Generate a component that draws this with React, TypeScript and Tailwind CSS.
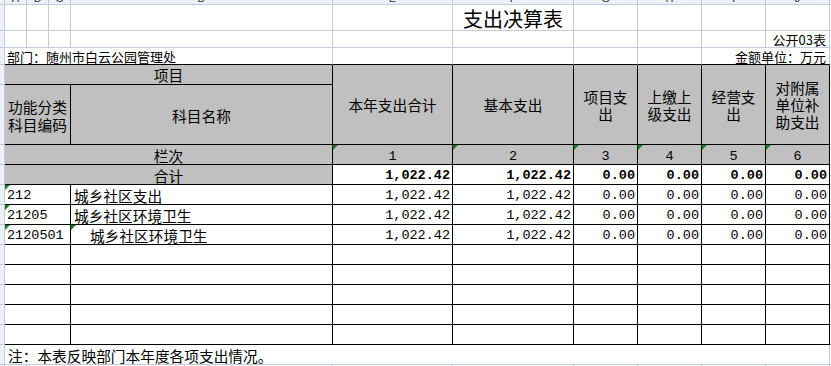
import React from "react";

const line = "border-[#c3cbdf]";
const head = "bg-[#edf0f5]";
const mono = "font-['Liberation_Mono',monospace] text-[13.5px]";

const letters = ["A", "B", "C", "D", "E", "F", "G", "H", "I", "J"];
const money = ["本年支出合计", "基本支出"];

const rows = [
  { code: "212", name: "城乡社区支出", indent: false },
  { code: "21205", name: "城乡社区环境卫生", indent: false },
  { code: "2120501", name: "城乡社区环境卫生", indent: true }
];

const values = ["1,022.42", "1,022.42", "0.00", "0.00", "0.00", "0.00"];

function Flag() {
  return (
    <svg className="absolute left-0 top-0" width="5" height="5" viewBox="0 0 5 5">
      <polygon points="0,0 5,0 0,5" fill="#12861a" />
    </svg>
  );
}

function Side() {
  return <div className={`${head} border-r border-b ${line}`} />;
}

function Blank() {
  return <div className={`border-r border-b ${line}`} />;
}

function Edge() {
  return <div className={`border-b ${line}`} />;
}

export default function App() {
  return (
    <div className="h-[366px] w-[831px] overflow-hidden bg-white font-['Noto_Sans_CJK_SC',sans-serif] text-black">
      <div className="grid grid-cols-[5px_22px_22px_22px_262px_120px_121px_64px_64px_64px_64px_2px] grid-rows-[5px_26px_17px_17px_20px_60px_repeat(10,20px)_20px_2px]">
        {/* column letters, mostly cut off */}
        <Side />
        {letters.map(l => (
          <div
            key={l}
            className={`${head} flex items-end justify-center overflow-hidden border-r border-b ${line}`}
          >
            <span className="font-['Liberation_Sans',sans-serif] text-[11px] leading-[11px] text-[#333]">
              {l}
            </span>
          </div>
        ))}
        <div className={`${head} border-b ${line}`} />

        {/* title */}
        <Side />
        <Blank />
        <Blank />
        <Blank />
        <Blank />
        <Blank />
        <div className={`flex items-center justify-center pt-[3px] border-r border-b ${line} text-[20px] leading-[20px]`}>
          支出决算表
        </div>
        <Blank />
        <Blank />
        <Blank />
        <Blank />
        <Edge />

        <Side />
        <Blank />
        <Blank />
        <Blank />
        <Blank />
        <Blank />
        <Blank />
        <Blank />
        <Blank />
        <Blank />
        <div className={`flex items-end justify-end pr-[3px] border-r border-b ${line} text-[13px] leading-[15px]`}>
          公开03表
        </div>
        <Edge />

        <Side />
        <div className={`col-span-4 flex items-end pl-[2px] border-r ${line} border-b border-b-black text-[13px] leading-[15px]`}>
          部门：随州市白云公园管理处
        </div>
        <div className={`border-r ${line} border-b border-b-black`} />
        <div className={`border-r ${line} border-b border-b-black`} />
        <div className={`border-r ${line} border-b border-b-black`} />
        <div className={`border-r ${line} border-b border-b-black`} />
        <div className={`col-span-2 flex items-end justify-end pr-[3px] border-r ${line} border-b border-b-black text-[13px] leading-[15px]`}>
          金额单位：万元
        </div>
        <Edge />

        {/* header */}
        <Side />
        <div className="col-span-4 flex items-center justify-center border-r border-b border-black bg-[#c0c0c0] text-[14.7px] leading-[17px]">
          项目
        </div>
        {money.map(t => (
          <div
            key={t}
            className="row-span-2 flex items-center justify-center border-r border-b border-black bg-[#c0c0c0] text-[14.7px] leading-[17px]"
          >
            {t}
          </div>
        ))}
        <div className="row-span-2 flex items-center justify-center border-r border-b border-black bg-[#c0c0c0] text-center text-[14.7px] leading-[17px]">
          项目支<br />出
        </div>
        <div className="row-span-2 flex items-center justify-center border-r border-b border-black bg-[#c0c0c0] text-center text-[14.7px] leading-[17px]">
          上缴上<br />级支出
        </div>
        <div className="row-span-2 flex items-center justify-center border-r border-b border-black bg-[#c0c0c0] text-center text-[14.7px] leading-[17px]">
          经营支<br />出
        </div>
        <div className="row-span-2 flex items-center justify-center border-r border-b border-black bg-[#c0c0c0] text-center text-[14.7px] leading-[17px]">
          对附属<br />单位补<br />助支出
        </div>
        <Edge />

        <Side />
        <div className="col-span-3 flex items-center justify-center pt-[2px] border-r border-b border-black bg-[#c0c0c0] text-center text-[14.7px] leading-[18px]">
          功能分类<br />科目编码
        </div>
        <div className="flex items-center justify-center pt-[1px] border-r border-b border-black bg-[#c0c0c0] text-[14.7px] leading-[17px]">
          科目名称
        </div>
        <Edge />

        {/* column numbers */}
        <Side />
        <div className="col-span-4 flex items-center justify-center pt-[2px] border-r border-b border-black bg-[#c0c0c0] text-[14.7px] leading-[17px]">
          栏次
        </div>
        {[1, 2, 3, 4, 5, 6].map(n => (
          <div
            key={n}
            className={`relative flex items-center justify-center pt-[4px] border-r border-b border-black bg-[#c0c0c0] ${mono} leading-[15px]`}
          >
            <Flag />
            {n}
          </div>
        ))}
        <Edge />

        {/* total */}
        <Side />
        <div className="col-span-4 flex items-center justify-center pt-[2px] border-r border-b border-black bg-[#c0c0c0] text-[14.7px] leading-[17px]">
          合计
        </div>
        {values.map((v, i) => (
          <div
            key={i}
            className={`flex items-center justify-end pt-[3px] pr-[2px] border-r border-b border-black ${mono} font-bold leading-[16px]`}
          >
            {v}
          </div>
        ))}
        <Edge />

        {rows.map(r => (
          <React.Fragment key={r.code}>
            <Side />
            <div className={`relative col-span-3 flex items-center pt-[3px] pl-[2px] border-r border-b border-black ${mono} leading-[16px]`}>
              <Flag />
              {r.code}
            </div>
            <div className="relative flex items-center pt-[2px] pl-[3px] border-r border-b border-black text-[14.7px] leading-[17px]">
              {r.indent && <Flag />}
              <span className={r.indent ? "pl-[16px]" : ""}>{r.name}</span>
            </div>
            {values.map((v, i) => (
              <div
                key={i}
                className={`flex items-center justify-end pt-[3px] pr-[2px] border-r border-b border-black ${mono} leading-[16px]`}
              >
                {v}
              </div>
            ))}
            <Edge />
          </React.Fragment>
        ))}

        {[0, 1, 2, 3, 4].map(k => (
          <React.Fragment key={k}>
            <Side />
            <div className="col-span-3 border-r border-b border-black" />
            <div className="border-r border-b border-black" />
            <div className="border-r border-b border-black" />
            <div className="border-r border-b border-black" />
            <div className="border-r border-b border-black" />
            <div className="border-r border-b border-black" />
            <div className="border-r border-b border-black" />
            <div className="border-r border-b border-black" />
            <Edge />
          </React.Fragment>
        ))}

        {/* note */}
        <Side />
        <div className={`col-span-10 flex items-center pt-[2px] pl-[3px] border-r border-b ${line} text-[14.7px] leading-[17px]`}>
          注：本表反映部门本年度各项支出情况。
        </div>
        <Edge />

        <div className={`${head} border-r ${line}`} />
        <div className={`border-r ${line}`} />
        <div className={`border-r ${line}`} />
        <div className={`border-r ${line}`} />
        <div className={`border-r ${line}`} />
        <div className={`border-r ${line}`} />
        <div className={`border-r ${line}`} />
        <div className={`border-r ${line}`} />
        <div className={`border-r ${line}`} />
        <div className={`border-r ${line}`} />
        <div className={`border-r ${line}`} />
        <div />
      </div>
    </div>
  );
}
